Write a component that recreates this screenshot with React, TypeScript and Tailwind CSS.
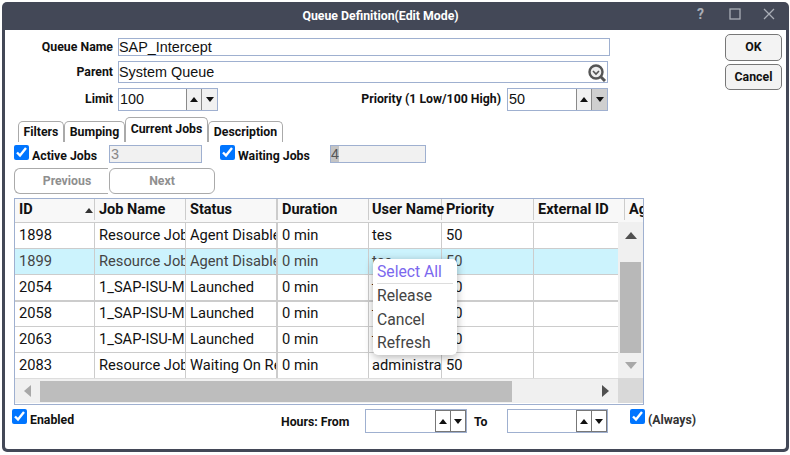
import React from "react";

const Tri = ({ up, c = "#111" }: { up?: boolean; c?: string }) => (
  <svg width="8" height="5" viewBox="0 0 8 5">
    <path d={up ? "M4 0L8 5H0Z" : "M4 5L8 0H0Z"} fill={c} />
  </svg>
);

const Spin = ({ w, value, h = "h-[23px]", active, dark }: { w: string; value?: string; h?: string; active?: boolean; dark?: boolean }) => (
  <div className={`flex ${w} ${h} border border-[#9fb0d0] bg-white`}>
    <div className="flex-1 pl-[1px] text-[14.4px] leading-[20px] [font-family:Liberation_Sans,sans-serif] text-[#111]">{value}</div>
    <div className={`w-[16px] flex items-center justify-center border-l border-r border-[#8a8a8a] ${dark ? "bg-white border-t border-b border-[#777]" : "bg-[#f1f1f1]"}`}><Tri up /></div>
    <div className={`w-[15px] flex items-center justify-center ${active ? "bg-[#cfcfcf]" : dark ? "bg-white border-t border-b border-r border-[#777]" : "bg-[#f1f1f1]"}`}><Tri /></div>
  </div>
);

const Label = ({ w, children, up }: { w: string; children: React.ReactNode; up?: boolean }) => (
  <div className={`${w} text-right text-[12.3px] font-bold text-[#111] shrink-0 ${up ? "-mt-[1px]" : ""}`}>{children}</div>
);

const cols = ["w-[80px]", "w-[91px]", "w-[92px]", "w-[91px]", "w-[73px]", "w-[92px]", "w-[91px]"];
const heads = ["ID", "Job Name", "Status", "Duration", "User Name", "Priority", "External ID"];
const rows = [
  ["1898", "Resource Job", "Agent Disabled", "0 min", "tes", "50", ""],
  ["1899", "Resource Job", "Agent Disabled", "0 min", "tes", "50", ""],
  ["2054", "1_SAP-ISU-Master", "Launched", "0 min", "tes", "50", ""],
  ["2058", "1_SAP-ISU-Master", "Launched", "0 min", "tes", "50", ""],
  ["2063", "1_SAP-ISU-Master", "Launched", "0 min", "tes", "50", ""],
  ["2083", "Resource Job", "Waiting On Resource", "0 min", "administrator", "50", ""],
];

const Tab = ({ w, active, children }: { w: string; active?: boolean; children: React.ReactNode }) => (
  <div className={`${w} shrink-0 border border-b-0 border-[#aaa] rounded-t-[5px] bg-white text-center text-[12.3px] font-bold text-[#111] ${active ? "h-[25px] leading-[23px]" : "h-[21px] leading-[21px]"}`}>
    {children}
  </div>
);

export default function App() {
  return (
    <div className="w-[790px] h-[455px] bg-white [font-family:Roboto,sans-serif] overflow-hidden pt-[2px] pl-[2px]">
      <div className="w-[787px] h-[450px] bg-[#434857] rounded-[5px] px-[3px] pb-[3px] flex flex-col">
        <div className="h-[28px] shrink-0 flex items-center text-white">
          <div className="flex-1 text-center text-[12.3px] font-bold pl-[59px]">Queue Definition(Edit Mode)</div>
          <div className="flex items-center pr-[11px] mb-[4px] text-[#a9adb6]">
            <span className="text-[14px] font-bold">?</span>
            <svg className="ml-[25px]" width="12" height="12" viewBox="0 0 12 12"><rect x="1" y="1" width="10" height="10" fill="none" stroke="#a9adb6" strokeWidth="1.3" /></svg>
            <svg className="ml-[22px]" width="12" height="12" viewBox="0 0 12 12"><path d="M1 1L11 11M11 1L1 11" stroke="#a9adb6" strokeWidth="1.3" /></svg>
          </div>
        </div>
        <div className="flex-1 bg-white rounded-b-[3px] flex relative">
          <div className="w-[640px] shrink-0 pt-[8px] pl-[9px]">
            <div className="flex items-center h-[18px]">
              <Label w="w-[99px]">Queue Name</Label>
              <div className="ml-[5px] w-[492px] h-[18px] border border-[#9fb0d0] text-[14.4px] leading-[16px] [font-family:Liberation_Sans,sans-serif] text-[#111]">SAP_Intercept</div>
            </div>
            <div className="flex items-center mt-[5px] h-[22px]">
              <Label w="w-[99px]">Parent</Label>
              <div className="ml-[5px] w-[490px] h-[22px] border border-[#9fb0d0] text-[14.4px] leading-[20px] [font-family:Liberation_Sans,sans-serif] text-[#111] flex justify-between">
                <span>System Queue</span>
                <svg className="mt-[1px]" width="20" height="19" viewBox="0 0 20 19">
                  <circle cx="9" cy="9" r="6.5" fill="#eee" stroke="#555" strokeWidth="2.4" />
                  <path d="M6 8l3 3 3-3" fill="none" stroke="#555" strokeWidth="1.6" />
                  <path d="M14 14l4 4" stroke="#555" strokeWidth="3" />
                </svg>
              </div>
            </div>
            <div className="flex items-center mt-[5px] h-[23px]">
              <Label w="w-[99px]" up>Limit</Label>
              <div className="ml-[5px]"><Spin w="w-[100px]" value="100" /></div>
              <div className="ml-[143px] -mt-[1px] text-[12.3px] font-bold text-[#111] w-[140px] text-right whitespace-nowrap">Priority (1 Low/100 High)</div>
              <div className="ml-[6px]"><Spin w="w-[101px]" value="50" active /></div>
            </div>
            <div className="flex items-end ml-[4px] mt-[6px]">
              <Tab w="w-[46px]">Filters</Tab>
              <Tab w="w-[61px]">Bumping</Tab>
              <Tab w="w-[83px]" active>Current Jobs</Tab>
              <Tab w="w-[75px]">Description</Tab>
            </div>
            <div className="flex items-center h-[18px] mt-[3px]">
              <input type="checkbox" defaultChecked readOnly className="w-[15px] h-[15px] m-0 -mt-[3px]" />
              <span className="ml-[3px] w-[77px] text-[12.3px] font-bold text-[#111] pt-[4px]">Active Jobs</span>
              <div className="w-[93px] h-[18px] border border-[#9fb0d0] bg-[#f1f1f1] text-[14.4px] leading-[16px] pl-[1px] text-[#888] [font-family:Liberation_Sans,sans-serif]">3</div>
              <input type="checkbox" defaultChecked readOnly className="w-[15px] h-[15px] m-0 -mt-[3px] ml-[18px]" />
              <span className="ml-[3px] w-[92px] text-[12.3px] font-bold text-[#111] pt-[4px]">Waiting Jobs</span>
              <div className="w-[96px] h-[18px] border border-[#9fb0d0] bg-[#f1f1f1] text-[14.4px] leading-[16px] text-[#555] [font-family:Liberation_Sans,sans-serif]"><span className="bg-[#c4c4c4]">4</span></div>
            </div>
            <div className="flex mt-[5px]">
              <div className="w-[94px] h-[26px] border border-r-0 border-[#aaa] rounded-l-[6px] pl-[11px] text-center text-[12.3px] font-bold leading-[24px] text-[#8f8f8f]">Previous</div>
              <div className="ml-[1px] w-[106px] h-[26px] border border-[#aaa] rounded-[6px] text-center text-[12.3px] font-bold leading-[24px] text-[#8f8f8f]">Next</div>
            </div>
            <div className="w-[630px] h-[207px] mt-[4px] border border-[#9fb0d0] flex flex-col overflow-hidden text-[14.7px] text-[#111]">
              <div className="h-[23px] flex shrink-0 bg-[#f8f8f8] font-bold text-[14.5px] overflow-hidden relative">
                {heads.map((h, i) => (
                  <div key={h} className={`${cols[i]} shrink-0 ${i === 4 ? "pl-[3px] overflow-visible" : "pl-[4px] overflow-hidden"} leading-[21px] ${i === 2 ? "border-r-2" : "border-r"} border-[#ccc] mb-[2px] whitespace-nowrap`}>{h}</div>
                ))}
                <div className="shrink-0 pl-[4px] leading-[21px]">Agent</div>
                <Tri2 />
              </div>
              <div className="flex h-[156px] shrink-0">
                <div className="w-[603px] shrink-0 overflow-hidden">
                  {rows.map((r, ri) => (
                    <div key={r[0]} className={`flex h-[26px] border-t ${ri === 3 ? "border-t-2 border-[#ccc]" : "border-[#ccc]"} ${ri === 1 ? "bg-[#ccf3fd]" : "bg-white"} overflow-hidden`}>
                      {r.map((c, i) => (
                        <div key={i} className={`${cols[i]} shrink-0 ${i === 4 ? "pl-[3px]" : "pl-[4px]"} ${ri === 3 ? "leading-[23px]" : "leading-[25px]"} ${i === 2 ? "border-r-2" : "border-r"} border-[#ccc] whitespace-nowrap overflow-hidden ${ri === 1 ? "text-[#444]" : ""}`}>{c}</div>
                      ))}
                    </div>
                  ))}
                </div>
                <div className="flex-1 bg-[#f0f0f0] flex flex-col items-center">
                  <div className="h-[40px] pt-[10px]"><Tri3 up c="#505050" /></div>
                  <div className="w-[21px] h-[91px] bg-[#b8b8b8]"></div>
                  <div className="h-[25px] flex items-center justify-center"><Tri3 c="#a8a8a8" /></div>
                </div>
              </div>
              <div className="flex h-[25px] shrink-0">
                <div className="w-[603px] bg-[#f0f0f0] flex items-center border-t border-[#ddd]">
                  <div className="w-[25px] flex justify-center"><TriH left c="#a8a8a8" /></div>
                  <div className="w-[472px] h-[21px] bg-[#bdbdbd]"></div>
                  <div className="ml-[90px] flex"><TriH c="#505050" /></div>
                </div>
                <div className="flex-1 bg-[#d9d9d9]"></div>
              </div>
            </div>
            <div className="flex mt-[4px] -ml-[2px] h-[26px]">
              <input type="checkbox" defaultChecked readOnly className="w-[15px] h-[15px] m-0" />
              <span className="ml-[3px] w-[251px] text-[12.3px] font-bold text-[#111] pt-[2px]">Enabled</span>
              <span className="w-[84px] text-[12.3px] font-bold text-[#111] pt-[4px] whitespace-nowrap">Hours: From</span>
              <Spin w="w-[102px]" h="h-[24px]" dark />
              <span className="ml-[7px] w-[33px] text-[12.3px] font-bold text-[#111] pt-[4px]">To</span>
              <Spin w="w-[101px]" h="h-[24px]" dark />
            </div>
          </div>
          <div className="flex-1 relative">
            <div className="flex flex-col items-end pr-[4px] pt-[4px] gap-[3px]">
              <div className="w-[57px] h-[27px] border border-[#777] rounded-[5px] bg-[#f3f3f3] text-center text-[12.3px] font-bold leading-[25px] text-[#111]">OK</div>
              <div className="w-[57px] h-[26px] border border-[#777] rounded-[5px] bg-[#f3f3f3] text-center text-[12.3px] font-bold leading-[24px] text-[#111]">Cancel</div>
            </div>
            <div className="absolute left-[-15px] top-[379px] flex">
              <input type="checkbox" defaultChecked readOnly className="w-[15px] h-[15px] m-0" />
              <span className="ml-[3px] text-[12.3px] font-bold text-[#333] pt-[2px] whitespace-nowrap">(Always)</span>
            </div>
          </div>
          <div className="absolute left-[368px] top-[229px] w-[84px] h-[96px] bg-white rounded-[5px] shadow-[0_2px_8px_rgba(0,0,0,0.3)] text-[15.7px] text-[#444] px-[4px] pt-[2px]">
            <div className="text-[#7b68ee] h-[23px] leading-[22px] border-b border-[#ddd]">Select All</div>
            <div className="leading-[24px]">Release</div>
            <div className="leading-[24px]">Cancel</div>
            <div className="leading-[22px]">Refresh</div>
          </div>
        </div>
      </div>
    </div>
  );
}

const Tri2 = () => (
  <div className="absolute left-[70px] top-[9px]"><Tri up c="#333" /></div>
);
const Tri3 = ({ up, c }: { up?: boolean; c: string }) => (
  <svg width="12" height="7" viewBox="0 0 12 7"><path d={up ? "M6 0L12 7H0Z" : "M6 7L12 0H0Z"} fill={c} /></svg>
);
const TriH = ({ left, c }: { left?: boolean; c: string }) => (
  <svg width="7" height="12" viewBox="0 0 7 12"><path d={left ? "M0 6L7 0V12Z" : "M7 6L0 0V12Z"} fill={c} /></svg>
);
